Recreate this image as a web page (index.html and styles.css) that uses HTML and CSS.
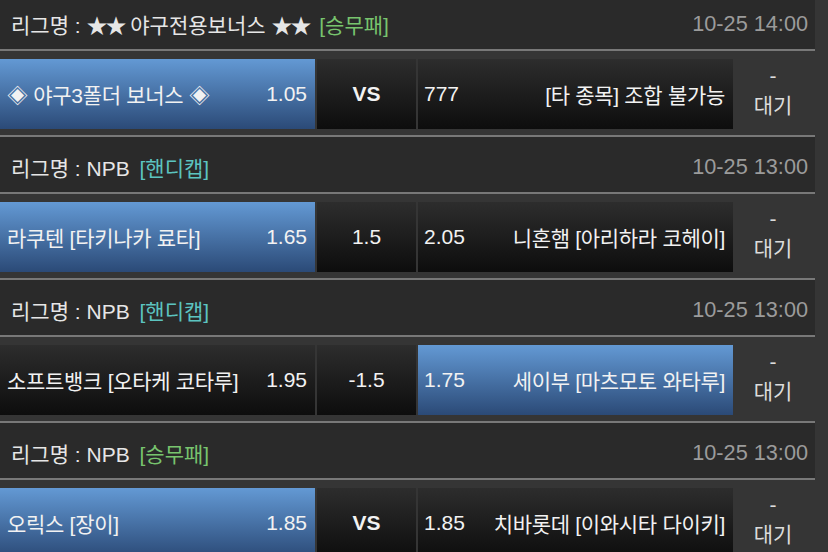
FILE: index.html
```html
<!DOCTYPE html>
<html lang="ko">
<head>
<meta charset="utf-8">
<link rel="stylesheet" href="styles.css">
</head>
<body>
<div class="list">
  <div class="league">
    <div class="league-name">리그명 : <span class="star">★★</span> 야구전용보너스 <span class="star">★★</span> <span class="type wdl">[승무패]</span></div>
    <div class="time">10-25 14:00</div>
  </div>
  <div class="match">
    <div class="cell side sel"><span class="team">◈ 야구3폴더 보너스 ◈</span><span class="odds">1.05</span></div>
    <div class="cell mid vs">VS</div>
    <div class="cell side away"><span class="odds">777</span><span class="team">[타 종목] 조합 불가능</span></div>
    <div class="status"><span>-</span><span>대기</span></div>
  </div>

  <div class="league">
    <div class="league-name">리그명 : NPB <span class="type hc">[핸디캡]</span></div>
    <div class="time">10-25 13:00</div>
  </div>
  <div class="match">
    <div class="cell side sel"><span class="team">라쿠텐 [타키나카 료타]</span><span class="odds">1.65</span></div>
    <div class="cell mid">1.5</div>
    <div class="cell side away"><span class="odds">2.05</span><span class="team">니혼햄 [아리하라 코헤이]</span></div>
    <div class="status"><span>-</span><span>대기</span></div>
  </div>

  <div class="league">
    <div class="league-name">리그명 : NPB <span class="type hc">[핸디캡]</span></div>
    <div class="time">10-25 13:00</div>
  </div>
  <div class="match">
    <div class="cell side"><span class="team">소프트뱅크 [오타케 코타루]</span><span class="odds">1.95</span></div>
    <div class="cell mid">-1.5</div>
    <div class="cell side away sel"><span class="odds">1.75</span><span class="team">세이부 [마츠모토 와타루]</span></div>
    <div class="status"><span>-</span><span>대기</span></div>
  </div>

  <div class="league">
    <div class="league-name">리그명 : NPB <span class="type wdl">[승무패]</span></div>
    <div class="time">10-25 13:00</div>
  </div>
  <div class="match">
    <div class="cell side sel"><span class="team">오릭스 [장이]</span><span class="odds">1.85</span></div>
    <div class="cell mid vs">VS</div>
    <div class="cell side away"><span class="odds">1.85</span><span class="team">치바롯데 [이와시타 다이키]</span></div>
    <div class="status"><span>-</span><span>대기</span></div>
  </div>
</div>
</body>
</html>
```

FILE: styles.css
```css
html, body {
  margin: 0;
  padding: 0;
  background: #353535;
  overflow: hidden;
}
body {
  font-family: "Liberation Sans", Arial, "Noto Sans CJK KR", sans-serif;
  font-size: 21px;
  color: #f2f2f2;
}
.list {
  width: 815px;
  margin-top: -8px;
}
.league {
  display: flex;
  justify-content: space-between;
  align-items: center;
  padding: 4px 7px 0 11px;
  box-sizing: border-box;
  height: 59px;
  background: #2a2a2a;
  border-top: 2px solid #787878;
  border-bottom: 2px solid #787878;
  margin-bottom: 8px;
  color: #e6e6e6;
}
.team { letter-spacing: -0.3px; }
.star { letter-spacing: -2px; }
.type { margin-left: 4px; }
.type.wdl { color: #78c46e; }
.type.hc { color: #5cc4c0; }
.time {
  color: #9b9b9b;
  font-size: 21.7px;
}
.match {
  display: flex;
  gap: 2px;
  height: 70px;
  margin-bottom: 6px;
}
.cell {
  display: flex;
  align-items: center;
  background: linear-gradient(#2d2d2d, #0d0d0d);
  box-sizing: border-box;
}
.side {
  width: 315px;
  justify-content: space-between;
  padding: 0 8px 0 7px;
}
.side.away { padding: 0 8px 0 6px; }
.sel {
  background: linear-gradient(#6399d4, #2b4a77);
}
.mid {
  width: 99px;
  justify-content: center;
}
.vs { font-weight: bold; }
.status {
  width: 80px;
  margin-left: -2px;
  display: flex;
  flex-direction: column;
  align-items: center;
  justify-content: center;
  line-height: 30px;
  padding-bottom: 6px;
  box-sizing: border-box;
  color: #dcdcdc;
}
```
